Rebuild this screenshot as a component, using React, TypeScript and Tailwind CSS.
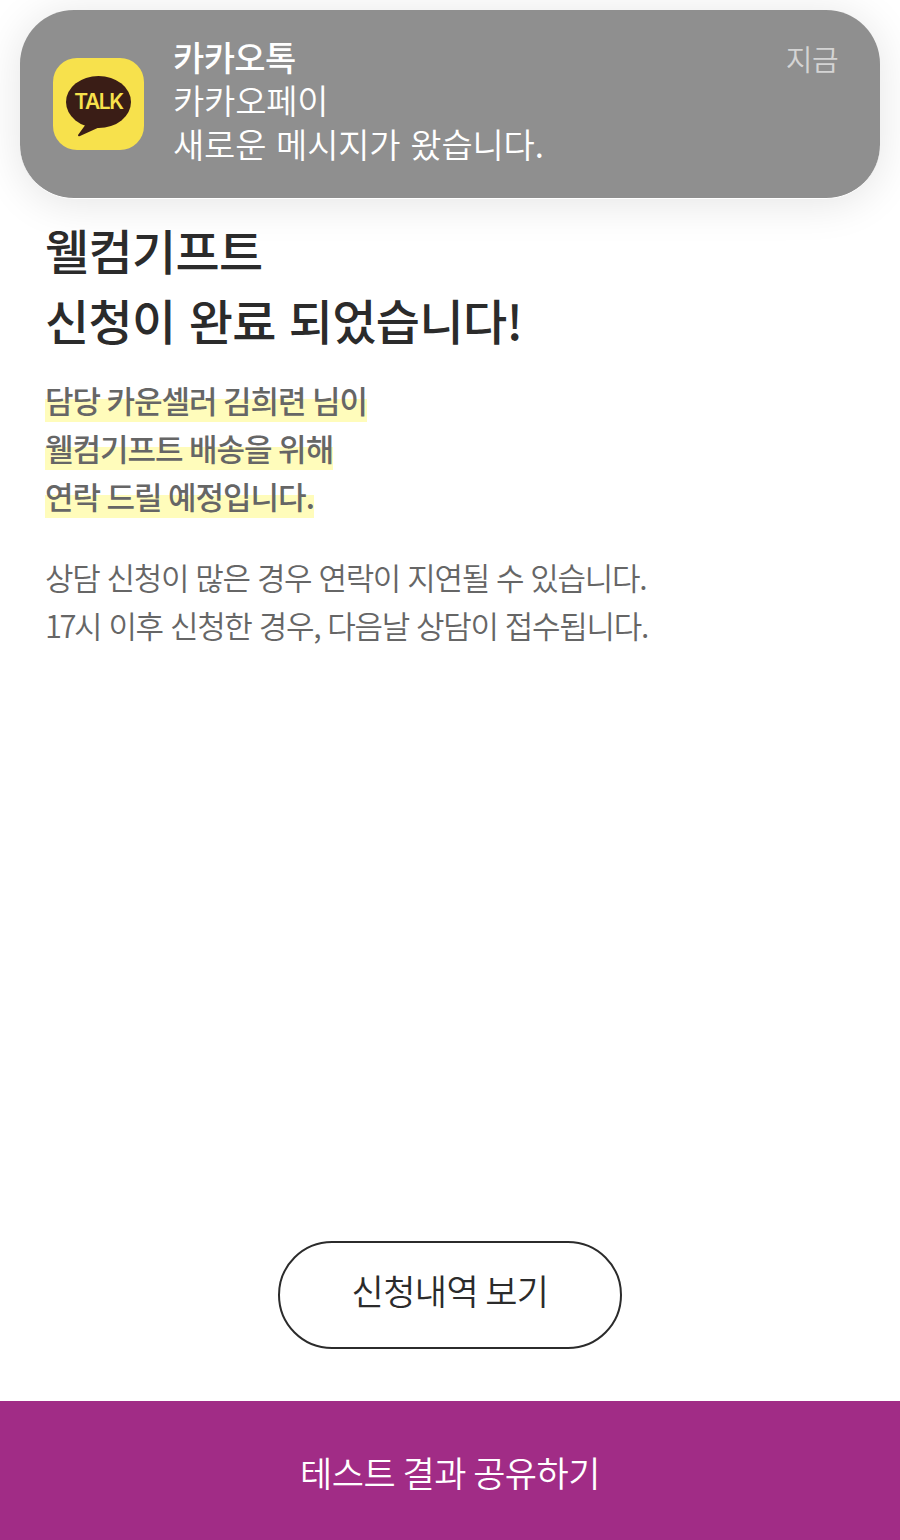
import React from 'react';

const FONT = "font-['Noto_Sans_CJK_KR','Noto_Sans',sans-serif]";

function KakaoIcon() {
  return (
    <div className="relative h-[92px] w-[91px] shrink-0 rounded-[24px] bg-[#f7e14c]">
      <svg viewBox="0 0 91 92" className="absolute inset-0 h-full w-full">
        <ellipse cx="45.5" cy="44" rx="32.5" ry="26" fill="#3a1d16" />
        <path d="M33 66 L25 77 Q25 79 27 78 L49 68 Z" fill="#3a1d16" />
      </svg>
      <span className="absolute left-0 right-0 top-[29px] text-center font-['Inter',sans-serif] text-[21px] font-semibold leading-[30px] tracking-[-1.4px] text-[#f7e14c]">
        TALK
      </span>
    </div>
  );
}

function Notification() {
  return (
    <div className="mx-[20px] mt-[10px] flex h-[189px] items-center rounded-[54px] border-b border-white bg-[#8f8f8f] pl-[33px] pr-[42px] shadow-[0_4px_44px_rgba(0,0,0,0.11)]">
      <KakaoIcon />
      <div className="mb-[8px] ml-[29px] flex-1 text-[34px] leading-[43.5px] text-white">
        <p className="font-medium tracking-[-0.6px]">카카오톡</p>
        <p className="font-[350] tracking-[-0.2px]">카카오페이</p>
        <p className="font-[350] tracking-[-0.2px] [word-spacing:2.5px]">새로운 메시지가 왔습니다.</p>
      </div>
      <span className="mb-[90px] text-[29px] font-[350] tracking-[-0.6px] text-[#d4d4d4]">지금</span>
    </div>
  );
}

function Mark({ children }: { children: React.ReactNode }) {
  return (
    <p className="h-[48px]">
      <span className="bg-[linear-gradient(transparent_45%,#fffcbb_45%,#fffcbb_92%,transparent_92%)] pb-[4px]">{children}</span>
    </p>
  );
}

export default function App() {
  return (
    <div className={`flex h-[1540px] w-[900px] flex-col bg-white ${FONT}`}>
      <Notification />

      <div className="px-[45px] pt-[15px]">
        <h1 className="text-[48px] font-medium leading-[70px] tracking-[-0.65px] text-[#2b2b2b] [word-spacing:3px]">
          웰컴기프트
          <br />
          신청이 완료 되었습니다!
        </h1>
        <div className="mt-[22px] text-[31px] font-medium leading-[48px] tracking-[-1px] text-[#666666] [word-spacing:0.5px]">
          <Mark>담당 카운셀러 김희련 님이</Mark>
          <Mark>웰컴기프트 배송을 위해</Mark>
          <Mark>연락 드릴 예정입니다.</Mark>
        </div>
        <p className="mt-[33px] text-[31px] font-[350] leading-[47.5px] tracking-[-1.3px] text-[#666666] [word-spacing:1.5px]">
          상담 신청이 많은 경우 연락이 지연될 수 있습니다.
          <br />
          <span className="tracking-[-2.5px]">17</span>시 이후 신청한 경우, 다음날 상담이 접수됩니다.
        </p>
      </div>

      <div className="mt-auto flex justify-center pb-[52px]">
        <button className="h-[108px] w-[344px] rounded-full border-[2.5px] border-[#2b2b2b] bg-white pb-[10px] text-[35px] font-[350] tracking-[-0.6px] text-[#2b2b2b]">
          신청내역 보기
        </button>
      </div>
      <button className="h-[139px] w-full bg-[#a12c86] pt-[4px] text-[35px] font-[350] tracking-[-0.5px] text-white">
        테스트 결과 공유하기
      </button>
    </div>
  );
}
